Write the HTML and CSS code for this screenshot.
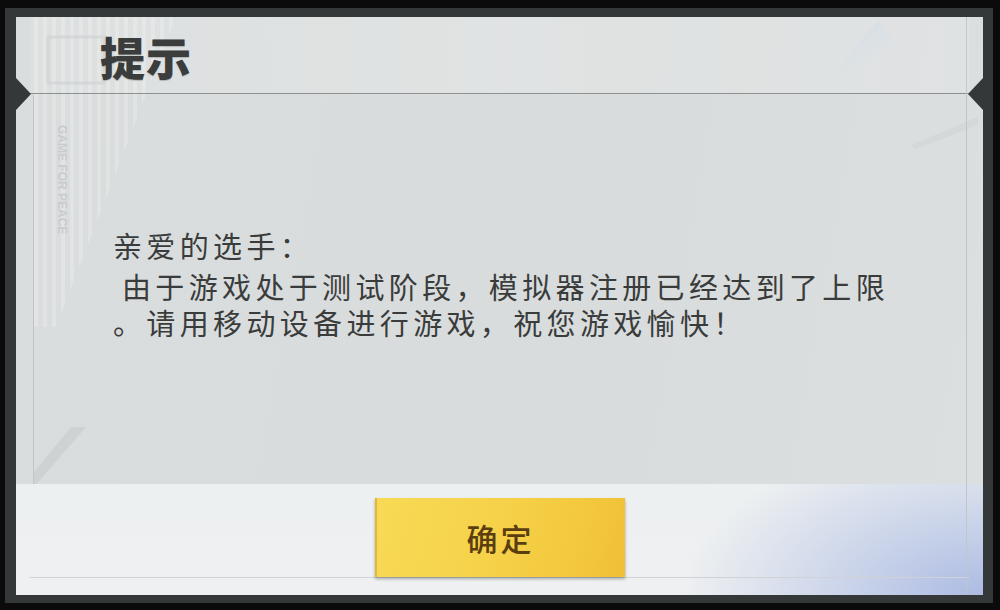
FILE: index.html
```html
<!DOCTYPE html>
<html lang="zh-CN">
<head>
    <meta charset="UTF-8">
    <meta name="viewport" content="width=device-width, initial-scale=1.0">
    <title>提示</title>
    <link rel="stylesheet" href="styles.css">
</head>
<body>
    <div class="frame">
        <div class="panel">
            <!-- 背景装饰 -->
            <svg class="deco" width="967" height="578" viewBox="0 0 967 578">
                <defs>
                    <pattern id="stripes" width="9" height="10" patternUnits="userSpaceOnUse">
                        <rect width="4" height="10" fill="#ffffff" opacity="0.22"/>
                    </pattern>
                    <linearGradient id="swoosh" x1="0" y1="0" x2="1" y2="1">
                        <stop offset="0" stop-color="#c4d3e0" stop-opacity="0.9"/>
                        <stop offset="1" stop-color="#dfe3e5" stop-opacity="0"/>
                    </linearGradient>
                </defs>
                <polygon points="18,0 160,0 40,310 18,310" fill="url(#stripes)"/>
                <rect x="32" y="20" width="56" height="46" fill="none" stroke="#c8cccd" stroke-width="3" opacity="0.6"/>
                <text x="0" y="0" transform="translate(42,108) rotate(90)" class="deco-text">GAME FOR PEACE</text>
                <path d="M862,4 C848,20 832,36 820,58 C842,46 862,36 884,28 Z" fill="url(#swoosh)"/>
                <path d="M895,128 L962,100 L962,108 L900,132 Z" fill="#cfd3d4" opacity="0.6"/>
                <polygon points="55,410 70,410 18,470 18,455" fill="#c4c8c9" opacity="0.55"/>
                <polygon points="38,548 52,545 24,578 18,578" fill="#b8bcbe" opacity="0.6"/>
            </svg>
            <div class="notch notch-left"></div>
            <div class="notch notch-right"></div>

            <div class="header">
                <h1 class="title">提示</h1>
            </div>
            <div class="content">
                <p class="greeting">亲爱的选手：</p>
                <p class="message">由于游戏处于测试阶段，模拟器注册已经达到了上限<br>。请用移动设备进行游戏，祝您游戏愉快！</p>
            </div>
            <div class="footer">
                <div class="footer-row">
                    <button class="confirm">确定</button>
                </div>
            </div>
        </div>
    </div>
</body>
</html>
```

FILE: styles.css
```css
body {
    margin: 0;
    width: 1000px;
    height: 610px;
    overflow: hidden;
    background-color: #0b0b0b;
    font-family: "Noto Sans CJK SC", "Noto Sans", sans-serif;
}
.frame {
    width: 967px;
    height: 578px;
    margin: 8px 0 0 5px;
    padding: 9px 10px 8px 11px;
    background-color: #353838;
}
.panel {
    position: relative;
    display: flex;
    flex-direction: column;
    width: 967px;
    height: 578px;
    background: linear-gradient(100deg, #dadddd 0%, #d9dcdc 60%, #dcdfe0 100%);
    overflow: hidden;
}
.panel::before,
.panel::after {
    content: "";
    position: absolute;
    top: 0;
    bottom: 0;
    width: 1px;
    background-color: #c2c6c7;
}
.panel::before {
    left: 17px;
    top: 78px;
}
.panel::after {
    right: 16px;
}
.deco {
    position: absolute;
    left: 0;
    top: 0;
}
.deco-text {
    font-family: "Liberation Sans", sans-serif;
    font-size: 12px;
    font-weight: bold;
    fill: #c8ccce;
}
.notch {
    position: absolute;
    top: 61px;
    width: 0;
    height: 0;
    border-top: 16px solid transparent;
    border-bottom: 16px solid transparent;
    z-index: 2;
}
.notch-left {
    left: 0;
    border-left: 15px solid #353838;
}
.notch-right {
    right: 0;
    border-right: 15px solid #353838;
}
.header {
    position: relative;
    height: 76px;
    margin: 0 14px;
    padding-left: 70px;
    border-bottom: 1px solid #8e9192;
    background: linear-gradient(90deg, rgba(255,255,255,0.08), rgba(255,255,255,0.2) 50%, rgba(255,255,255,0.12));
}
.title {
    margin: 0;
    padding-top: 12px;
    font-size: 45px;
    line-height: 56px;
    font-weight: 900;
    color: #3b3c3c;
    letter-spacing: 1px;
    text-shadow: 0 1px 1px rgba(0,0,0,0.2);
}
.content {
    position: relative;
    flex: 1;
    padding: 132px 0 0 97px;
    color: #3a3c3c;
    font-size: 29px;
    letter-spacing: 4.35px;
}
.greeting {
    margin: 0 0 4px;
    line-height: 38px;
}
.message {
    margin: 0;
    line-height: 36px;
    text-indent: 9px;
}
.footer {
    position: relative;
    height: 111px;
    padding-top: 14px;
    box-sizing: border-box;
    background:
        radial-gradient(ellipse 300px 160px at 100% 100%, rgba(150,170,222,0.75), rgba(170,186,225,0) 100%),
        linear-gradient(180deg, #edf0f1, #eef0f1);
}
.footer-row {
    display: flex;
    justify-content: center;
    margin: 0 14px;
    border-bottom: 1px solid #cfd3d5;
}
.confirm {
    width: 250px;
    height: 79px;
    border: none;
    border-left: 2px solid #e2b83a;
    background: linear-gradient(105deg, #f8da55 0%, #f6d24a 45%, #f3c83c 80%, #f0bf36 100%);
    box-shadow: 0 2px 3px rgba(0,0,0,0.3);
    font-family: "Noto Sans CJK SC", sans-serif;
    font-size: 31px;
    font-weight: 500;
    letter-spacing: 3px;
    color: #5b3e10;
    cursor: pointer;
}
```
